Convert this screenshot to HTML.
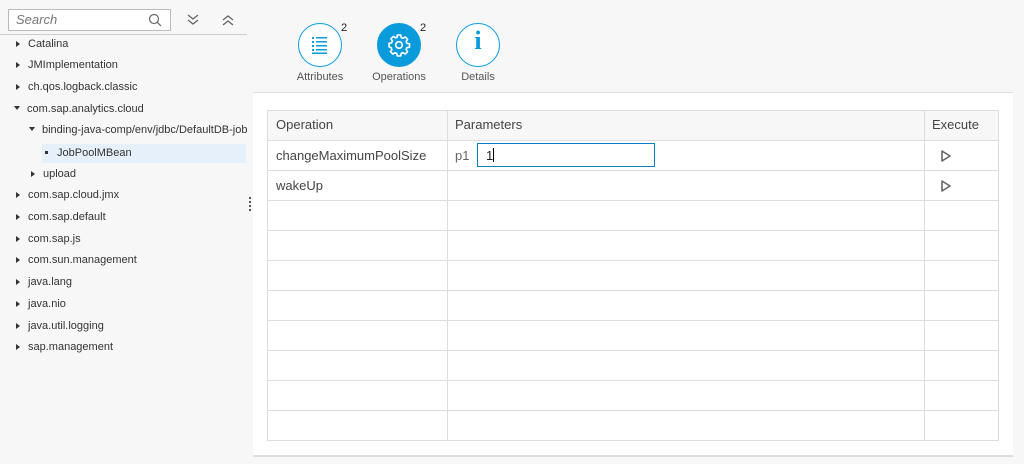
<!DOCTYPE html>
<html><head><meta charset="utf-8"><style>
*{margin:0;padding:0;box-sizing:border-box}
body{width:1024px;height:464px;background:#f7f7f7;font-family:"Liberation Sans",sans-serif;position:relative;overflow:hidden;color:#333}
.a{position:absolute}
.tr{position:absolute;font-size:11px;color:#333;white-space:nowrap;line-height:14px}
.tri{display:inline-block;width:0;height:0;border-top:3.5px solid transparent;border-bottom:3.5px solid transparent;border-left:4px solid #333;margin-right:8px;vertical-align:0px}
.dn{display:inline-block;width:0;height:0;border-left:3.5px solid transparent;border-right:3.5px solid transparent;border-top:4px solid #333;margin-right:7px;vertical-align:2px}
.circ{position:absolute;width:44px;height:44px;border-radius:50%;border:1px solid #0a9bdc;background:#fff}
.lab{position:absolute;font-size:11px;color:#555;text-align:center;width:80px}
.sup{position:absolute;font-size:11px;color:#222}
.cell{position:absolute;font-size:13px;color:#444}
</style></head><body>
<div class="a" style="left:8px;top:9px;width:163px;height:22px;border:1px solid #bbb;background:#fff"></div>
<div class="a" style="left:16px;top:12px;font-size:13px;font-style:italic;color:#777">Search</div>
<svg class="a" style="left:148px;top:13px" width="14" height="14"><circle cx="6" cy="6" r="4.5" fill="none" stroke="#666" stroke-width="1.2"/><line x1="9.3" y1="9.3" x2="13" y2="13" stroke="#666" stroke-width="1.2"/></svg>
<svg class="a" style="left:186px;top:13px" width="14" height="14"><polyline points="2,2 7,6 12,2" fill="none" stroke="#666" stroke-width="1.3"/><polyline points="2,7 7,11 12,7" fill="none" stroke="#666" stroke-width="1.3"/></svg>
<svg class="a" style="left:221px;top:13px" width="14" height="14"><polyline points="2,7 7,3 12,7" fill="none" stroke="#666" stroke-width="1.3"/><polyline points="2,12 7,8 12,12" fill="none" stroke="#666" stroke-width="1.3"/></svg>
<div class="a" style="left:0;top:34px;width:247px;height:1px;background:#ccc"></div>
<div class="tr" style="left:16px;top:37px"><span class="tri"></span>Catalina</div>
<div class="tr" style="left:16px;top:58px"><span class="tri"></span>JMImplementation</div>
<div class="tr" style="left:16px;top:80px"><span class="tri"></span>ch.qos.logback.classic</div>
<div class="tr" style="left:14px;top:102px"><span class="dn"></span>com.sap.analytics.cloud</div>
<div class="tr" style="left:29px;top:123px"><span class="dn"></span>binding-java-comp/env/jdbc/DefaultDB-job</div>
<div class="a" style="left:42px;top:144px;width:204px;height:19px;background:#e5f0fa"></div>
<div class="tr" style="left:45px;top:146px"><span style="display:inline-block;width:3px;height:3px;background:#333;margin-right:9px;vertical-align:2px"></span>JobPoolMBean</div>
<div class="tr" style="left:31px;top:167px"><span class="tri"></span>upload</div>
<div class="tr" style="left:16px;top:188px"><span class="tri"></span>com.sap.cloud.jmx</div>
<div class="tr" style="left:16px;top:210px"><span class="tri"></span>com.sap.default</div>
<div class="tr" style="left:16px;top:232px"><span class="tri"></span>com.sap.js</div>
<div class="tr" style="left:16px;top:253px"><span class="tri"></span>com.sun.management</div>
<div class="tr" style="left:16px;top:275px"><span class="tri"></span>java.lang</div>
<div class="tr" style="left:16px;top:297px"><span class="tri"></span>java.nio</div>
<div class="tr" style="left:16px;top:319px"><span class="tri"></span>java.util.logging</div>
<div class="tr" style="left:16px;top:340px"><span class="tri"></span>sap.management</div>
<div class="a" style="left:249px;top:197px;width:2px;height:2px;background:#555;box-shadow:0 4px #555,0 8px #555,0 12px #555"></div>
<div class="circ" style="left:298px;top:23px"></div>
<svg class="a" style="left:310px;top:35px" width="20" height="20"><g fill="#0a9bdc"><rect x="2" y="2" width="2" height="2"/><rect x="2" y="6" width="2" height="2"/><rect x="2" y="10" width="2" height="2"/><rect x="2" y="14" width="2" height="2"/><rect x="6" y="2" width="11" height="1.5"/><rect x="6" y="6" width="11" height="1.5"/><rect x="6" y="10" width="11" height="1.5"/><rect x="6" y="14" width="11" height="1.5"/><rect x="2" y="17.5" width="15" height="1.5"/></g></svg>
<div class="sup" style="left:341px;top:22px">2</div>
<div class="lab" style="left:280px;top:71px">Attributes</div>
<div class="circ" style="left:377px;top:23px;background:#0a9bdc;border-color:#0a9bdc"></div>
<svg class="a" style="left:387px;top:33px" width="24" height="24" viewBox="0 0 24 24"><path d="M10.3 2h3.4l.5 2.6 1.8.8 2.2-1.5 2.4 2.4-1.5 2.2.8 1.8 2.6.5v3.4l-2.6.5-.8 1.8 1.5 2.2-2.4 2.4-2.2-1.5-1.8.8-.5 2.6h-3.4l-.5-2.6-1.8-.8-2.2 1.5-2.4-2.4 1.5-2.2-.8-1.8L2 13.7v-3.4l2.6-.5.8-1.8-1.5-2.2 2.4-2.4 2.2 1.5 1.8-.8z" fill="none" stroke="#fff" stroke-width="1.6" stroke-linejoin="round"/><circle cx="12" cy="12" r="3.3" fill="none" stroke="#fff" stroke-width="1.6"/></svg>
<div class="sup" style="left:420px;top:22px">2</div>
<div class="lab" style="left:359px;top:71px">Operations</div>
<div class="a" style="left:363px;top:92px;width:72px;height:2px;background:#0a9bdc"></div>
<div class="circ" style="left:456px;top:23px"></div>
<div class="a" style="left:456px;top:26px;width:44px;text-align:center;font-family:'Liberation Serif',serif;font-weight:bold;font-size:26px;color:#0a9bdc">i</div>
<div class="lab" style="left:438px;top:71px">Details</div>
<div class="a" style="left:253px;top:92px;width:760px;height:1px;background:#ddd"></div>
<div class="a" style="left:253px;top:93px;width:760px;height:362px;background:#fff"></div>
<div class="a" style="left:253px;top:455px;width:760px;height:2px;background:#ddd"></div>
<div class="a" style="left:267px;top:110px;width:732px;height:331px;border:1px solid #ddd;background:#fff"></div>
<div class="a" style="left:268px;top:111px;width:730px;height:29px;background:#f7f7f7"></div>
<div class="a" style="left:447px;top:110px;width:1px;height:330px;background:#ddd"></div>
<div class="a" style="left:924px;top:110px;width:1px;height:330px;background:#ddd"></div>
<div class="a" style="left:268px;top:140px;width:730px;height:0;border-top:1px solid #ddd;box-shadow:0 30px #ddd,0 60px #ddd,0 90px #ddd,0 120px #ddd,0 150px #ddd,0 180px #ddd,0 210px #ddd,0 240px #ddd,0 270px #ddd"></div>
<div class="cell" style="left:276px;top:117px">Operation</div>
<div class="cell" style="left:455px;top:117px">Parameters</div>
<div class="cell" style="left:932px;top:117px">Execute</div>
<div class="cell" style="left:276px;top:148px">changeMaximumPoolSize</div>
<div class="cell" style="left:455px;top:148px;color:#666">p1</div>
<div class="a" style="left:477px;top:143px;width:178px;height:24px;border:1px solid #0a7fc4;background:#fff"></div>
<div class="cell" style="left:486px;top:148px;color:#222">1<span style="display:inline-block;width:1px;height:14px;background:#000;vertical-align:-2px"></span></div>
<svg class="a" style="left:940px;top:149px" width="12" height="14"><path d="M2 2 L10 7 L2 12 Z" fill="none" stroke="#666" stroke-width="1.6" stroke-linejoin="round"/></svg>
<div class="cell" style="left:276px;top:178px">wakeUp</div>
<svg class="a" style="left:940px;top:179px" width="12" height="14"><path d="M2 2 L10 7 L2 12 Z" fill="none" stroke="#666" stroke-width="1.6" stroke-linejoin="round"/></svg>
</body></html>
